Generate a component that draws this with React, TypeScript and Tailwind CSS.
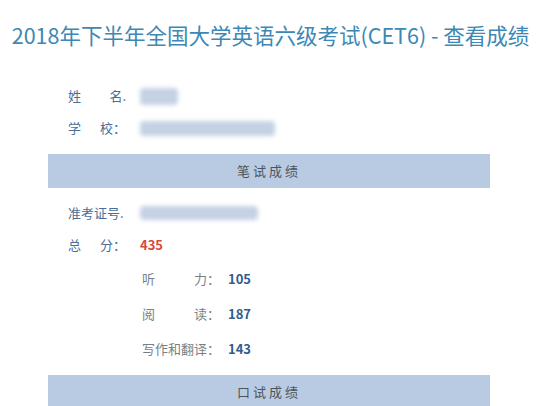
const font = { fontFamily: '"Noto Sans CJK SC", "Noto Sans", sans-serif' };

// blurred placeholder for hidden personal info
function Masked({ w, h }: { w: string; h: string }) {
  return <div className={`${w} ${h} bg-[#c5d2e4] blur-[2px] rounded-sm`} />;
}

function InfoRow({ label, children }: { label: string[]; children: React.ReactNode }) {
  return (
    <div className="flex items-center h-[32px] pl-[20px]">
      <div className="flex w-[58px] justify-between whitespace-nowrap text-[13px] text-[#4a6d96]">
        {label.map((c, i) => (
          <span key={i}>{c}</span>
        ))}
      </div>
      <div className="ml-[14px] flex items-center">{children}</div>
    </div>
  );
}

function SubRow({ label, score }: { label: string[]; score: number }) {
  return (
    <div className="flex items-center h-[35px] pl-[94px]">
      <div className="flex w-[78px] justify-between whitespace-nowrap text-[13px] text-[#7a7f86]">
        {label.map((c, i) => (
          <span key={i}>{c}</span>
        ))}
      </div>
      <span className="ml-[8px] text-[13px] font-bold text-[#2f5d8c]">{score}</span>
    </div>
  );
}

function SectionBar({ title }: { title: string }) {
  return (
    <div className="h-[34px] bg-[#b8cbe3] flex items-center justify-center text-[13px] tracking-[3px] text-[#4f5358]">
      {title}
    </div>
  );
}

export default function App() {
  return (
    <div className="w-[541px] h-[406px] bg-white overflow-hidden" style={font}>
      <h1 className="pt-[20px] h-[50px] text-center text-[21.5px] leading-[30px] text-[#3d88b4]">
        2018年下半年全国大学英语六级考试(CET6) - 查看成绩
      </h1>
      <div className="ml-[48px] w-[442px] mt-[30px]">
        <InfoRow label={["姓", "名."]}>
          <Masked w="w-[38px]" h="h-[17px]" />
        </InfoRow>
        <InfoRow label={["学", "校："]}>
          <Masked w="w-[135px]" h="h-[15px]" />
        </InfoRow>
        <div className="mt-[10px]">
          <SectionBar title="笔试成绩" />
        </div>
        <div className="mt-[9px]">
          <InfoRow label={["准考证号."]}>
            <Masked w="w-[118px]" h="h-[14px]" />
          </InfoRow>
          <InfoRow label={["总", "分："]}>
            <span className="text-[13px] font-bold text-[#d9493a]">435</span>
          </InfoRow>
        </div>
        <SubRow label={["听", "力："]} score={105} />
        <SubRow label={["阅", "读："]} score={187} />
        <SubRow label={["写作和翻译："]} score={143} />
        <div className="mt-[9px]">
          <SectionBar title="口试成绩" />
        </div>
      </div>
    </div>
  );
}
